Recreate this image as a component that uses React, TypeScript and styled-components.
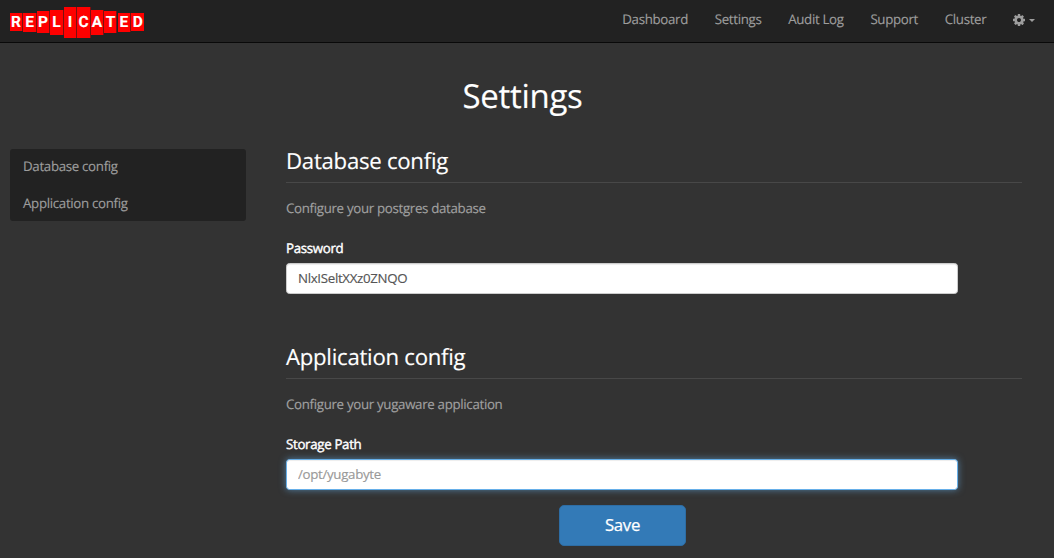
import React from "react";
import styled, { createGlobalStyle } from "styled-components";

const GlobalStyle = createGlobalStyle`
  * { box-sizing: border-box; }
  html { height: 100%; overflow: hidden; background: #333333; }
  body {
    margin: 0;
    height: 100%;
    background: #333333;
    color: #ffffff;
    font-family: "Open Sans", "Noto Sans", sans-serif;
    font-size: 13.3px;
    letter-spacing: -0.32px;
    line-height: 18px;
    font-variant-ligatures: none;
    text-rendering: geometricPrecision;
    -webkit-text-stroke: 0.15px currentColor;
  }
`;

const Navbar = styled.header`
  display: flex;
  justify-content: space-between;
  height: 43px;
  padding: 0 19px 0 10px;
  background: #222222;
  border-bottom: 1px solid #090909;
`;

const Logo = styled.div`
  display: flex;
  align-items: center;
  gap: 0.4px;
  height: 44.5px;
`;

const Tile = styled.span<{ $height: number }>`
  display: flex;
  align-items: center;
  justify-content: center;
  width: 13.1px;
  height: ${(p) => p.$height}px;
  background: #ff0000;
  border-right: 1px solid #7a1010;
  color: #ffffff;
  font-family: Roboto, "Liberation Sans", sans-serif;
  font-size: 15.5px;
  font-weight: 700;
  letter-spacing: 0;
  line-height: 15px;
  &:last-child { border-right-width: 0; }
`;

const Nav = styled.nav`
  display: flex;
  align-items: flex-start;
`;

const NavLink = styled.a`
  display: flex;
  align-items: center;
  height: 38px;
  padding: 0 13.35px 0;
  color: #9d9d9d;
  text-decoration: none;
  white-space: nowrap;
`;

const GearLink = styled(NavLink)`
  padding: 2px 0 0 13.3px;
  gap: 4px;
`;

const Caret = styled.span`
  margin-top: 1px;
  border-top: 3.5px solid #9d9d9d;
  border-left: 3.2px solid transparent;
  border-right: 3.2px solid transparent;
`;

const PageTitle = styled.h1`
  margin: 33px 0 0;
  padding-right: 9px;
  font-size: 33px;
  font-weight: 400;
  line-height: 40px;
  text-align: center;
`;

const Columns = styled.div`
  display: flex;
  align-items: flex-start;
  gap: 40px;
  padding: 33px 32px 0 10px;
`;

const Sidebar = styled.aside`
  display: flex;
  flex-direction: column;
  width: 236px;
  height: 72px;
  background: #222222;
  border-radius: 3px;
`;

const SidebarLink = styled.a`
  flex: none;
  height: 37px;
  padding: 8px 13px;
  color: #9d9d9d;
  text-decoration: none;
`;

const Form = styled.form`
  flex: 1;
  display: flex;
  flex-direction: column;
`;

const Section = styled.section`
  height: 196px;
`;

const SectionTitle = styled.h2`
  height: 34px;
  margin: 0;
  border-bottom: 1px solid #484848;
  font-size: 22.2px;
  font-weight: 400;
  letter-spacing: -0.27px;
  line-height: 23px;
`;

const Description = styled.p`
  margin: 16px 0 22px;
  color: #a0a0a0;
`;

const Label = styled.label`
  display: block;
  height: 24px;
  -webkit-text-stroke: 0.4px #ffffff;
`;

const Input = styled.input<{ $active?: boolean }>`
  display: block;
  width: 672px;
  height: 31px;
  padding: 0 11px 1px;
  border: 1px solid ${(p) => (p.$active ? "#66afe9" : "#cccccc")};
  border-radius: 3.5px;
  outline: none;
  background: #ffffff;
  box-shadow: ${(p) =>
    p.$active
      ? "inset 0 1px 1px rgba(0,0,0,.075), 0 0 7px rgba(102,175,233,.6)"
      : "inset 0 1px 1px rgba(0,0,0,.075)"};
  color: #555555;
  font: inherit;
  letter-spacing: inherit;
  &::placeholder { color: #999999; opacity: 1; }
`;

const SaveButton = styled.button`
  width: 127px;
  height: 41px;
  margin: -36px 0 0 273px;
  border: 1px solid #2e6da4;
  border-radius: 5px;
  background: #337ab7;
  color: #ffffff;
  font-family: inherit;
  font-size: 16.8px;
  line-height: 22px;
  letter-spacing: -0.3px;
  padding: 0 0 1px;
  -webkit-text-stroke: 0.25px #ffffff;
`;

const tiles: [string, number][] = [
  ["R", 18], ["E", 19.5], ["P", 22], ["L", 25], ["I", 31.5],
  ["C", 31.5], ["A", 25], ["T", 22], ["E", 19.5], ["D", 18],
];

const GearIcon = () => (
  <svg width="12" height="12" viewBox="0 0 1536 1536" fill="#9d9d9d">
    <path d="M1024 768q0-106-75-181t-181-75-181 75-75 181 75 181 181 75 181-75 75-181zm512-109v222q0 12-8 23t-20 13l-185 28q-19 54-39 91 35 50 107 138 10 12 10 25t-9 23q-27 37-99 108t-94 71q-12 0-26-9l-138-108q-44 23-91 38-16 136-29 186-7 28-36 28H657q-14 0-24.500-8.500T621 1506l-28-184q-49-16-90-37l-141 107q-10 9-25 9-14 0-25-11-126-114-165-168-7-10-7-23 0-12 8-23 15-21 51-66.500t54-70.500q-27-50-41-99L29 913q-13-2-21-12.500T0 877V655q0-12 8-23t19-13l186-28q14-46 39-92-40-57-107-138-10-12-10-24 0-10 9-23 26-36 98.500-107.500T337 135q13 0 26 10l138 107q44-23 91-38 16-136 29-186 7-28 36-28h222q14 0 24.500 8.500T915 30l28 184q49 16 90 37l142-107q9-9 24-9 13 0 25 10 129 119 165 170 7 8 7 22 0 12-8 23-15 21-51 66.500t-54 70.500q26 50 41 98l183 28q13 2 21 12.500t8 23.500z" />
  </svg>
);

export default function App() {
  return (
    <>
      <GlobalStyle />
      <Navbar>
        <Logo aria-label="Replicated">
          {tiles.map(([letter, height], i) => (
            <Tile key={i} $height={height}>{letter}</Tile>
          ))}
        </Logo>
        <Nav>
          {["Dashboard", "Settings", "Audit Log", "Support", "Cluster"].map((name) => (
            <NavLink key={name}>{name}</NavLink>
          ))}
          <GearLink><GearIcon /><Caret /></GearLink>
        </Nav>
      </Navbar>
      <PageTitle>Settings</PageTitle>
      <Columns>
        <Sidebar>
          <SidebarLink>Database config</SidebarLink>
          <SidebarLink>Application config</SidebarLink>
        </Sidebar>
        <Form>
          <Section>
            <SectionTitle>Database config</SectionTitle>
            <Description>Configure your postgres database</Description>
            <Label htmlFor="password">Password</Label>
            <Input id="password" defaultValue="NlxISeltXXz0ZNQO" />
          </Section>
          <Section>
            <SectionTitle>Application config</SectionTitle>
            <Description>Configure your yugaware application</Description>
            <Label htmlFor="storage">Storage Path</Label>
            <Input id="storage" placeholder="/opt/yugabyte" $active />
          </Section>
          <SaveButton type="button">Save</SaveButton>
        </Form>
      </Columns>
    </>
  );
}
